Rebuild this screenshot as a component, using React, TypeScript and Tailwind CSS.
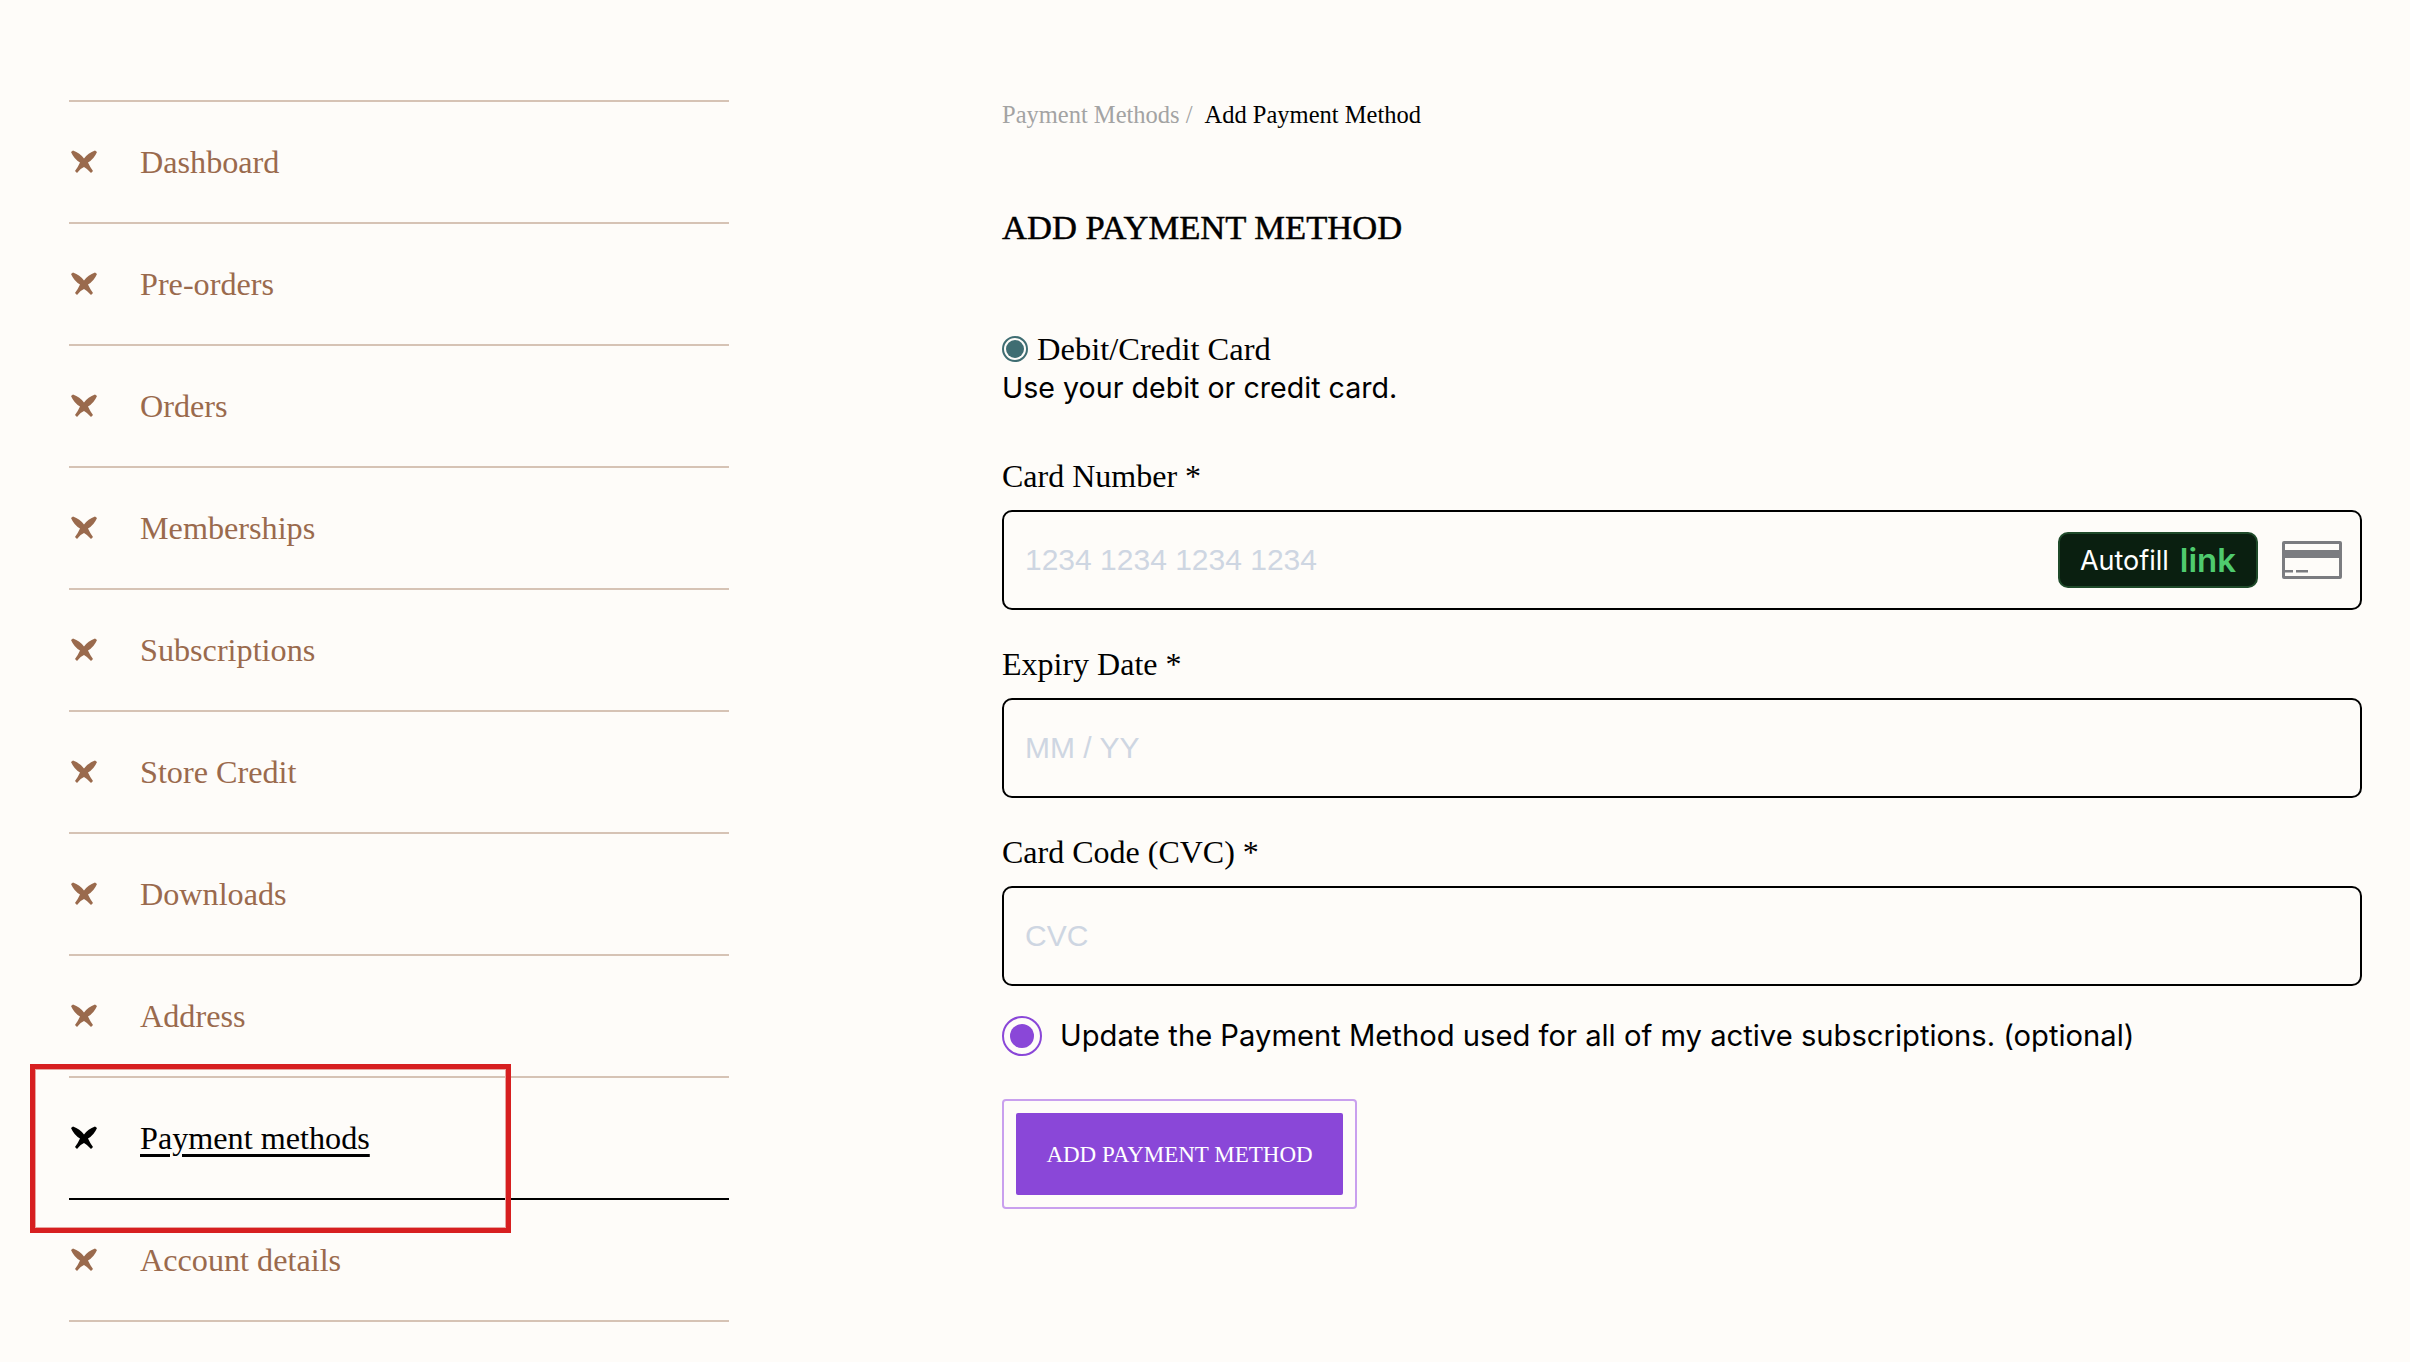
const navItems = [
  'Dashboard',
  'Pre-orders',
  'Orders',
  'Memberships',
  'Subscriptions',
  'Store Credit',
  'Downloads',
  'Address',
  'Payment methods',
  'Account details',
]

const fields = [
  { label: 'Card Number *', placeholder: '1234 1234 1234 1234', card: true },
  { label: 'Expiry Date *', placeholder: 'MM / YY', card: false },
  { label: 'Card Code (CVC) *', placeholder: 'CVC', card: false },
]

const serif = "font-['Liberation_Serif',serif]"

function NavMark({ className }: { className: string }) {
  return (
    <svg viewBox="0 0 28 24" className={`ml-[1px] h-[24px] w-[28px] shrink-0 ${className}`} fill="currentColor">
      <path d="M1 2 L3 .5 Q10 3 14 8.5 Q18 3 25 .5 L27 2 Q24 9 18 12.5 Q20 17 23 21 L21 23 Q17 18.5 14 17 Q10 18.5 7 23 L5 21 Q8 17 10 12.5 Q4 9 1 2Z" />
    </svg>
  )
}

function CardIcon() {
  return (
    <svg viewBox="0 0 60 38" className="h-[38px] w-[60px] shrink-0" fill="#7b7c80">
      <path d="M2 0h56a2 2 0 0 1 2 2v34a2 2 0 0 1-2 2H2a2 2 0 0 1-2-2V2a2 2 0 0 1 2-2Zm1 3v6h54V3H3Zm0 14v18h54V17H3Z" fillRule="evenodd" />
      <rect x="3" y="29" width="8" height="2.5" />
      <rect x="14" y="29" width="12" height="2.5" />
    </svg>
  )
}

export default function App() {
  return (
    <div className="relative flex h-[1362px] w-[2410px] overflow-hidden bg-[#fefcf9]">
      <aside className="ml-[69px] w-[660px] shrink-0 pt-[100px]">
        <ul className="border-t-2 border-[#d6c3b5]">
          {navItems.map((item) => {
            const active = item === 'Payment methods'
            return (
              <li
                key={item}
                className={`flex h-[122px] items-center gap-[42px] border-b-2 ${active ? 'border-black' : 'border-[#d6c3b5]'}`}
              >
                <NavMark className={active ? 'text-black' : 'text-[#9a6a4d]'} />
                <span
                  className={`${serif} text-[32.2px] leading-none ${active ? 'text-black underline decoration-[3px] underline-offset-[5px]' : 'text-[#9a6a4d]'}`}
                >
                  {item}
                </span>
              </li>
            )
          })}
        </ul>
      </aside>

      <main className="ml-[273px] w-[1360px] shrink-0 pt-[100px]">
        <div className={`${serif} flex h-[30px] items-center gap-[12px] text-[24.5px] leading-none`}>
          <span className="text-[#a3a3a3]">Payment Methods /</span>
          <span className="text-black">Add Payment Method</span>
        </div>

        <h1 className={`${serif} mt-[77px] text-[34.6px] leading-[40px] text-black [-webkit-text-stroke:0.5px_black]`}>
          ADD PAYMENT METHOD
        </h1>

        <div className="mt-[85px] flex h-[34px] items-center gap-[9px]">
          <span className="flex h-[26px] w-[26px] items-center justify-center rounded-full border-2 border-[#3f6d72]">
            <span className="h-[18px] w-[18px] rounded-full bg-[#3f6d72]" />
          </span>
          <span className={`${serif} text-[32.5px] leading-none text-black`}>Debit/Credit Card</span>
        </div>
        <p className="mt-[4px] font-['Inter',sans-serif] text-[28.6px] leading-[36px] text-black">
          Use your debit or credit card.
        </p>

        <div className="mt-[50px] flex flex-col gap-[34px]">
          {fields.map((field) => (
            <div key={field.label}>
              <label className={`${serif} block text-[32px] leading-[40px] text-black`}>{field.label}</label>
              <div className="mt-[14px] flex h-[100px] items-center rounded-[10px] border-2 border-black pl-[21px] pr-[18px]">
                <input
                  readOnly
                  placeholder={field.placeholder}
                  className="min-w-0 flex-1 bg-transparent pb-[2px] font-['Liberation_Sans',sans-serif] text-[30px] outline-none placeholder:text-[#ced6e2]"
                />
                {field.card && (
                  <div className="flex items-center gap-[24px]">
                    <div className="flex h-[56px] w-[200px] items-center justify-center gap-[11px] rounded-[10px] border-2 border-[#1f4a2a] bg-[#0a1f10]">
                      <span className="font-['Inter',sans-serif] text-[27px] leading-none text-white">Autofill</span>
                      <span className="font-['Inter',sans-serif] text-[33px] font-semibold leading-none text-[#4fcb6e]">link</span>
                    </div>
                    <CardIcon />
                  </div>
                )}
              </div>
            </div>
          ))}
        </div>

        <div className="mt-[30px] flex h-[40px] items-center gap-[18px]">
          <span className="flex h-[40px] w-[40px] items-center justify-center rounded-full border-2 border-[#8a47d8]">
            <span className="h-[24px] w-[24px] rounded-full bg-[#8a47d8]" />
          </span>
          <span className="font-['Inter',sans-serif] text-[29.2px] leading-none text-black">
            Update the Payment Method used for all of my active subscriptions. (optional)
          </span>
        </div>

        <div className="mt-[43px] inline-block rounded-[4px] border-2 border-[#c9a0ee] p-[12px]">
          <button className={`${serif} block h-[82px] w-[327px] rounded-[2px] bg-[#8a47d8] text-[23px] leading-none text-white`}>
            ADD PAYMENT METHOD
          </button>
        </div>
      </main>

      <div className="absolute left-[30px] top-[1064px] h-[169px] w-[481px] border-[5px] border-[#d71f20] shadow-[inset_0_0_0_1px_#e8a5a0]" />
    </div>
  )
}
